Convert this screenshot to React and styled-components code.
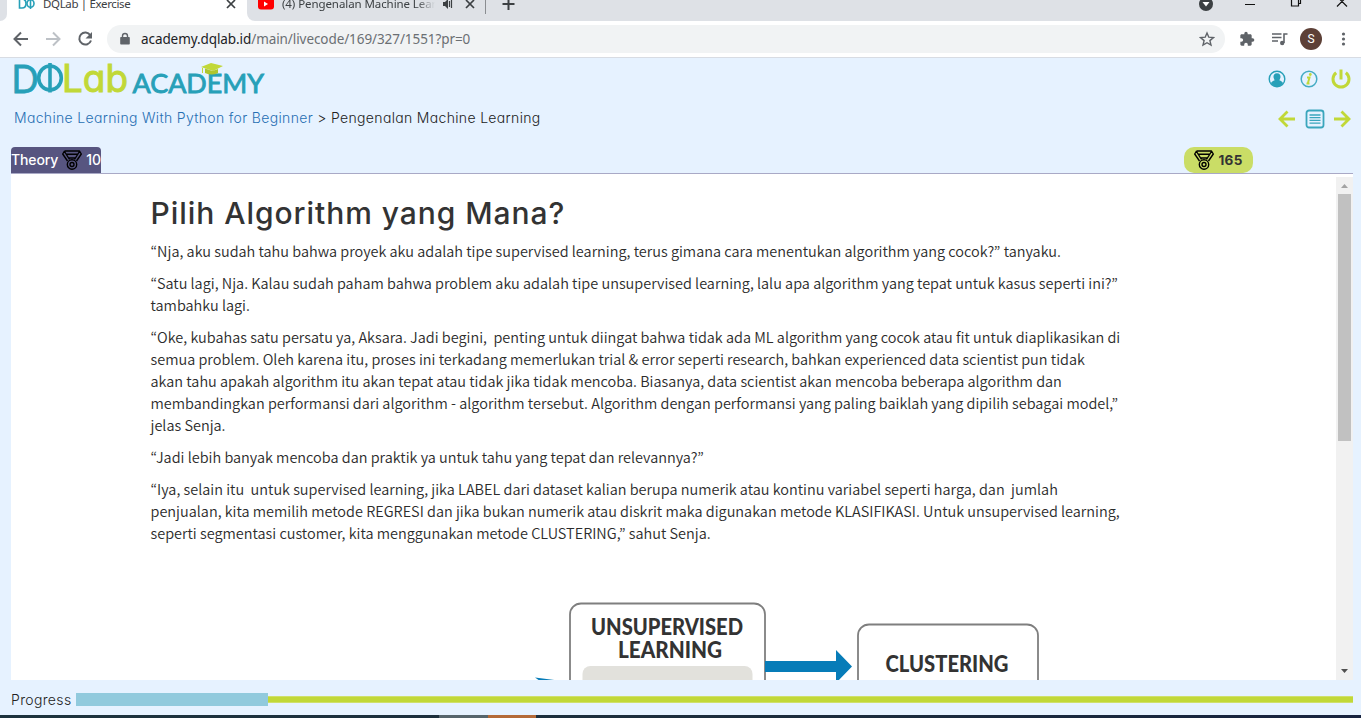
import React from 'react';
import styled, { createGlobalStyle } from 'styled-components';

const teal = '#27a0b8';
const lime = '#c1d838';
const heading = '"Inter", "Open Sans", sans-serif';

const Global = createGlobalStyle`
  * { box-sizing: border-box; }
  body { margin: 0; overflow: hidden; }
`;

const Screen = styled.div`
  width: 1361px;
  height: 718px;
  display: flex;
  flex-direction: column;
  background: #e6f2ff;
  overflow: hidden;
  font-family: ${heading};
  font-feature-settings: 'cv11';
`;

/* ---------- browser chrome ---------- */
const TabStrip = styled.div`
  height: 21px;
  flex: none;
  display: flex;
  background: #fff;
  overflow: hidden;
  font: 11.5px/16px "Noto Sans", sans-serif;
  color: #3c4043;
`;
const StripEdge = styled.div`
  width: 7px;
  background: #dee1e6;
  border-bottom-right-radius: 7px;
`;
const ActiveTab = styled.div`
  width: 240px;
  display: flex;
  align-items: flex-start;
  padding: 0 10px 0 11px;
`;
const StripRest = styled.div`
  flex: 1;
  display: flex;
  align-items: flex-start;
  background: #dee1e6;
  border-bottom-left-radius: 8px;
  padding-left: 10px;
`;
const TabTitle = styled.span`
  width: ${(p) => p.$w}px;
  margin: -4px 0 0 ${(p) => p.$gap}px;
  white-space: nowrap;
  overflow: hidden;
  letter-spacing: ${(p) => p.$ls || 0}px;
  ${(p) => p.$fade && 'mask-image: linear-gradient(90deg, #000 88%, transparent);'}
`;
const Spacer = styled.div`flex: 1;`;
const Divider = styled.i`
  width: 1px;
  height: 14px;
  margin: 0 16px 0 9px;
  background: #8a8d91;
`;
const TabIcon = styled.svg`
  flex: none;
  margin-left: ${(p) => p.$ml || 0}px;
`;
const Toolbar = styled.div`
  height: 37px;
  flex: none;
  display: flex;
  align-items: center;
  background: #fff;
  border-bottom: 1px solid #d8dce3;
  padding: 0 13px 0 13px;
`;
const Address = styled.div`
  flex: 1;
  height: 28px;
  display: flex;
  align-items: center;
  margin-left: 14px;
  padding: 0 10px 0 12px;
  border-radius: 14px;
  background: #f1f3f4;
  font: 13.5px "Noto Sans", sans-serif;
  color: #6b6f73;
`;
const Url = styled.span`
  margin-left: 10px;
  letter-spacing: ${(p) => p.$ls}px;
  b { font-weight: 400; color: #202124; }
`;
const NavIcons = styled.div`
  display: flex;
  gap: 16px;
`;
const ToolIcons = styled.div`
  display: flex;
  align-items: center;
  padding-left: 14px;
`;
const Avatar = styled.div`
  width: 22px;
  height: 22px;
  margin: 0 16px 0 12px;
  border-radius: 50%;
  background: #5d4037;
  color: #fff;
  font: 12px/22px Roboto, sans-serif;
  text-align: center;
`;

/* ---------- page header ---------- */
const Header = styled.header`
  height: 89px;
  flex: none;
  display: flex;
  justify-content: space-between;
  padding: 0 10px 0 13px;
`;
const Brand = styled.div`
  display: flex;
  flex-direction: column;
`;
const Crumbs = styled.nav`
  margin: 10px 0 0 1px;
  font-size: 14px;
  font-weight: 300;
  line-height: 20px;
  white-space: nowrap;
  color: #222;
  letter-spacing: ${(p) => p.$ls}px;
  a { color: #276fb3; }
`;
const Actions = styled.div`
  display: flex;
  flex-direction: column;
  align-items: flex-end;
  padding-top: 11px;
`;
const ActionRow = styled.div`
  display: flex;
  align-items: center;
  gap: ${(p) => p.$gap}px;
  height: 20px;
  margin-bottom: 20px;
`;

/* ---------- lesson ---------- */
const TabBar = styled.div`
  height: 27px;
  flex: none;
  display: flex;
  justify-content: space-between;
  margin: 0 8px 0 11px;
  border-bottom: 1px solid #a9a9c6;
`;
const Theory = styled.div`
  width: 90px;
  height: 26px;
  display: flex;
  align-items: center;
  justify-content: space-between;
  border-radius: 4px 4px 0 0;
  background: #575580;
  color: #fff;
  font-size: 14px;
  line-height: 24px;
  font-weight: 500;
  letter-spacing: -0.1px;
`;
const Score = styled.div`
  width: 69px;
  height: 26px;
  margin-right: 100px;
  display: flex;
  align-items: center;
  justify-content: center;
  gap: 4px;
  border-radius: 10px;
  background: #cadd66;
  color: #333;
  font-size: 13.5px;
  font-weight: 700;
  letter-spacing: 0.3px;
`;
const Panel = styled.main`
  height: 506px;
  flex: none;
  display: flex;
  margin: 0 8px 0 11px;
  background: #fff;
  overflow: hidden;
`;
const Article = styled.article`
  flex: 1;
  padding: 19px 0 0 139.5px;
  overflow: hidden;
`;
const Title = styled.h1`
  margin: 0 0 7px;
  font: 500 30px/40px ${heading};
  letter-spacing: ${(p) => p.$ls}px;
  color: #333;
`;
const Para = styled.p`
  margin: 0 0 10px;
  font: 350 14.485px/22px "Noto Sans CJK KR", sans-serif;
  font-feature-settings: normal;
  color: #2c2c2c;
`;
const Line = styled.span`
  display: block;
  white-space: pre;
`;
const Figure = styled.figure`
  margin: 56px 0 0 383.5px;
`;
const ScrollTrack = styled.div`
  width: 17px;
  height: 503px;
  margin-top: 3px;
  display: flex;
  flex-direction: column;
  align-items: center;
  background: #f1f1f1;
`;
const ScrollThumb = styled.div`
  width: 13px;
  height: 247px;
  background: #c1c1c1;
`;
const ProgressRow = styled.div`
  height: 35px;
  flex: none;
  display: flex;
  align-items: center;
  padding: 4px 8px 0 11px;
  font-size: 14px;
  font-weight: 300;
  color: #222;
`;
const ProgressLabel = styled.span`
  width: 65px;
  letter-spacing: ${(p) => p.$ls}px;
`;
const ProgressDone = styled.div`
  width: 192px;
  height: 13px;
  background: #91cadd;
`;
const ProgressLeft = styled.div`
  flex: 1;
  height: 7px;
  background: ${lime};
  border: solid #cfe06a;
  border-width: 1px 0;
`;
const Taskbar = styled.div`
  height: 3px;
  flex: none;
  display: flex;
  padding-left: 439px;
  background: linear-gradient(90deg, #1d333d, #1b2c3c 60%, #17233f);
`;
const TaskItem = styled.div`
  width: ${(p) => p.$w}px;
  background: ${(p) => p.$c};
`;

const Medal = () => (
  <svg width="20" height="20" viewBox="0 0 20 20" fill="none" stroke="#000" strokeWidth="1.400" strokeLinejoin="round">
    <path d="M2.500 1h15l1.800 3-4.800 7M2.500 1 .7 4l4.800 7M4 4.200h12M2.500 1.500 7.500 9.500M17.500 1.500 12.500 9.500M6.500 8h7" />
    <circle cx="10" cy="14.500" r="4.700" />
    <circle cx="10" cy="14.500" r="2" />
  </svg>
);

const Logo = () => (
  <svg width="252" height="40" viewBox="13 58 252 40">
    <g fontFamily="Lato, sans-serif">
      <g fill={teal} stroke={teal}>
        <text x="11.500" y="92.500" fontSize="39.500" strokeWidth=".8" textLength="27" lengthAdjust="spacingAndGlyphs">D</text>
        <ellipse cx="50" cy="78" rx="11.300" ry="12" fill="none" strokeWidth="3.600" />
        <path d="M50 63v29.500" strokeWidth="3.600" />
      </g>
      <text x="62" y="92.300" fontFamily="Inter, sans-serif" fontSize="38" fill={lime} stroke={lime} strokeWidth="1" textLength="66" lengthAdjust="spacingAndGlyphs">Lab</text>
      <text x="132.500" y="92.500" fontSize="27.500" fill={teal} stroke={teal} strokeWidth=".9" textLength="131.500" lengthAdjust="spacingAndGlyphs">ACADEMY</text>
    </g>
    <path d="m201 67 10-4 12 3-10 5z" fill={lime} />
    <path d="M205 68.500v4.500q7 3 13 0v-4l-5.500 2z" fill="#aec52e" />
    <path d="M202.500 68v5" stroke={lime} />
  </svg>
);

const Diagram = () => (
  <svg width="506" height="80" viewBox="534 600 506 80" fontFamily="Lato, sans-serif" fontWeight="900" fill="#333" fontSize="22">
    <path d="M535 677.500 562 681H540z" fill="#077cb8" />
    <rect x="570" y="603.500" width="195" height="120" rx="11" fill="#fff" stroke="#7f7f7f" strokeWidth="1.800" />
    <rect x="582.500" y="666" width="170" height="50" rx="8" fill="#e2e1dc" />
    <text x="591" y="634.500" textLength="152" lengthAdjust="spacingAndGlyphs">UNSUPERVISED</text>
    <text x="618" y="657.500" textLength="104" lengthAdjust="spacingAndGlyphs">LEARNING</text>
    <path d="M765 661h71v-11l16 16.500-16 16.500v-11h-71z" fill="#077cb8" />
    <rect x="858" y="624.500" width="180" height="120" rx="11" fill="#fff" stroke="#7f7f7f" strokeWidth="1.800" />
    <text x="885.500" y="671.500" textLength="123" lengthAdjust="spacingAndGlyphs">CLUSTERING</text>
  </svg>
);

const paragraphs = [
  ['“Nja, aku sudah tahu bahwa proyek aku adalah tipe supervised learning, terus gimana cara menentukan algorithm yang cocok?” tanyaku.'],
  [
    '“Satu lagi, Nja. Kalau sudah paham bahwa problem aku adalah tipe unsupervised learning, lalu apa algorithm yang tepat untuk kasus seperti ini?”',
    'tambahku lagi.',
  ],
  [
    '“Oke, kubahas satu persatu ya, Aksara. Jadi begini,  penting untuk diingat bahwa tidak ada ML algorithm yang cocok atau fit untuk diaplikasikan di',
    'semua problem. Oleh karena itu, proses ini terkadang memerlukan trial & error seperti research, bahkan experienced data scientist pun tidak',
    'akan tahu apakah algorithm itu akan tepat atau tidak jika tidak mencoba. Biasanya, data scientist akan mencoba beberapa algorithm dan',
    'membandingkan performansi dari algorithm - algorithm tersebut. Algorithm dengan performansi yang paling baiklah yang dipilih sebagai model,”',
    'jelas Senja.',
  ],
  ['“Jadi lebih banyak mencoba dan praktik ya untuk tahu yang tepat dan relevannya?”'],
  [
    '“Iya, selain itu  untuk supervised learning, jika LABEL dari dataset kalian berupa numerik atau kontinu variabel seperti harga, dan  jumlah',
    'penjualan, kita memilih metode REGRESI dan jika bukan numerik atau diskrit maka digunakan metode KLASIFIKASI. Untuk unsupervised learning,',
    'seperti segmentasi customer, kita menggunakan metode CLUSTERING,” sahut Senja.',
  ],
];

export default function App() {
  return (
    <Screen>
      <Global />
      <TabStrip>
        <StripEdge />
        <ActiveTab>
          <TabIcon width="17" height="10" viewBox="0 0 17 10" fill="none" stroke={teal} strokeWidth="1.600">
            <path d="M1.500-1v9H4q4 0 4-4.500T4-1M12.500-2V9" />
            <ellipse cx="12.500" cy="3.500" rx="3.500" ry="3.800" />
          </TabIcon>
          <TabTitle $gap={8} $w={150} $ls={-0.35}>DQLab | Exercise</TabTitle>
          <Spacer />
          <TabIcon width="12" height="10" viewBox="0 0 12 10" stroke="#3c4043" strokeWidth="1.700"><path d="m2 0 8 8M10 0 2 8" /></TabIcon>
        </ActiveTab>
        <StripRest>
          <TabIcon width="17" height="11" viewBox="0 0 17 11"><rect x="1" y="-3" width="16" height="12.500" rx="3" fill="red" /><path d="M7 1.500v5L11 4z" fill="#fff" /></TabIcon>
          <TabTitle $gap={8} $w={153} $ls={-0.08} $fade>(4) Pengenalan Machine Learning</TabTitle>
          <TabIcon $ml={7} width="12" height="10" viewBox="0 0 12 10" fill="none" stroke="#3c4043"><path d="M1 2h2l3-3v10L3 6H1z" fill="#3c4043" stroke="none" /><path d="M7.500 1v6M9.500 0v8" strokeWidth="1.200" /></TabIcon>
          <TabIcon $ml={10} width="12" height="10" viewBox="0 0 12 10" stroke="#3c4043" strokeWidth="1.700"><path d="m2 0 8 8M10 0 2 8" /></TabIcon>
          <Divider />
          <TabIcon width="13" height="11" viewBox="0 0 13 11" stroke="#3c4043" strokeWidth="2"><path d="M.5 4h12M6.500-2v12" /></TabIcon>
          <Spacer />
          <TabIcon width="162" height="20" viewBox="1199 0 162 20" fill="none" stroke="#111">
            <circle cx="1206" cy="4" r="7" fill="#3c4043" stroke="none" />
            <path d="M1202.500 2h7l-3.500 4.500z" fill="#fff" stroke="none" />
            <path d="M1245 4.500h10M1291.500-1v7h7v-7M1298.500 3.500h2v-5M1337 6.500l10-10M1337-3.500l10 10" strokeWidth="1.200" />
          </TabIcon>
        </StripRest>
      </TabStrip>
      <Toolbar>
        <NavIcons>
          <svg width="16" height="16" viewBox="0 0 16 16" fill="none" stroke="#5f6368" strokeWidth="2"><path d="M15 8H2.500M8 1.500 1.500 8 8 14.500" /></svg>
          <svg width="16" height="16" viewBox="0 0 16 16" fill="none" stroke="#bdc1c6" strokeWidth="2"><path d="M1 8h12.500M8 1.500 14.500 8 8 14.500" /></svg>
          <svg width="16" height="16" viewBox="0 0 16 16" fill="none" stroke="#5f6368" strokeWidth="2"><path d="M13.300 4.200A6 6 0 1 0 14 9.500" /><path d="M15 1v6.500H8.500z" fill="#5f6368" stroke="none" /></svg>
        </NavIcons>
        <Address>
          <svg width="12" height="14" viewBox="0 0 12 14" fill="#5f6368"><path d="M2.800 5V4a3.200 3.200 0 0 1 6.400 0v1H10q.8 0 .8.800v5.900q0 .8-.8.800H2q-.8 0-.8-.8V5.800Q1.200 5 2 5zm1.400 0h3.600V4a1.800 1.800 0 0 0-3.600 0z" /></svg>
          <Url $ls={-0.08}><b>academy.dqlab.id</b>/main/livecode/169/327/1551?pr=0</Url>
          <Spacer />
          <svg width="16" height="16" viewBox="0 0 16 16" fill="none" stroke="#5f6368" strokeWidth="1.400"><path d="m8 2 1.800 4.200 4.600.4-3.500 3 1.100 4.500L8 11.700l-4 2.400 1.100-4.500-3.500-3 4.600-.4z" /></svg>
        </Address>
        <ToolIcons>
          <svg width="16" height="16" viewBox="0 0 24 24" fill="#5f6368"><path d="M20.500 11H19V7c0-1.100-.9-2-2-2h-4V3.500a2.500 2.500 0 0 0-5 0V5H4c-1.100 0-2 .9-2 2v3.800h1.500a2.700 2.700 0 0 1 0 5.400H2V20c0 1.100.9 2 2 2h3.800v-1.500a2.700 2.700 0 0 1 5.400 0V22H17c1.100 0 2-.9 2-2v-4h1.500a2.500 2.500 0 0 0 0-5z" /></svg>
          <TabIcon $ml={16} width="17" height="14" viewBox="0 0 17 14" fill="none" stroke="#5f6368" strokeWidth="1.600"><path d="M1 2h9.500M1 5.500h9.500M1 9h6M13 11V2h3.500" /><circle cx="11.200" cy="11" r="2.200" fill="#5f6368" stroke="none" /></TabIcon>
          <Avatar>S</Avatar>
          <svg width="10" height="16" viewBox="0 0 10 16" fill="#5f6368"><circle cx="5.500" cy="3" r="1.600" /><circle cx="5.500" cy="8" r="1.600" /><circle cx="5.500" cy="13" r="1.600" /></svg>
        </ToolIcons>
      </Toolbar>
      <Header>
        <Brand>
          <Logo />
          <Crumbs $ls={0.33}><a>Machine Learning With Python for Beginner</a> &gt; Pengenalan Machine Learning</Crumbs>
        </Brand>
        <Actions>
          <ActionRow $gap={13.5}>
            <svg width="18" height="18" viewBox="0 0 18 18"><circle cx="9" cy="9" r="7.800" fill="none" stroke={teal} strokeWidth="1.400" /><path d="M9 3.200c2.600 0 3.800 1.800 3.500 4-.2 1.300-.8 2.300-1.200 3 1.700.7 3.400 1.300 3.700 3A7.500 7.500 0 0 1 9 16.500a7.500 7.500 0 0 1-6-3.300c.3-1.700 2-2.300 3.700-3-.4-.7-1-1.700-1.200-3-.3-2.200.9-4 3.500-4z" fill={teal} /></svg>
            <svg width="18" height="18" viewBox="0 0 18 18"><circle cx="9" cy="9" r="7.800" fill="none" stroke="#45acc4" strokeWidth="1.500" /><path d="M7 7.500h2.500l-1.700 6M6.500 13.500h3" fill="none" stroke={lime} strokeWidth="2" /><circle cx="10.300" cy="4.500" r="1.400" fill={lime} /></svg>
            <svg width="20" height="20" viewBox="0 0 20 20" fill="none" stroke={lime} strokeWidth="3"><path d="M5.200 3.700a8 8 0 1 0 9.600 0M10 .5v10" /></svg>
          </ActionRow>
          <ActionRow $gap={8.5}>
            <svg width="18" height="18" viewBox="0 0 18 18" fill="none" stroke={lime} strokeWidth="2.800"><path d="M17 9H2.500M9.500 1.500 2 9l7.500 7.500" /></svg>
            <svg width="20" height="20" viewBox="0 0 20 20" fill="none" stroke="#3aa6bd"><rect x="1.500" y="1.500" width="17" height="17" rx="2.500" strokeWidth="1.800" /><path d="M4.500 6h11M4.500 8.700h11M4.500 11.400h11M4.500 14.100h11" strokeWidth="1.300" /></svg>
            <svg width="18" height="18" viewBox="0 0 18 18" fill="none" stroke={lime} strokeWidth="2.800"><path d="M1 9h14.500M8.500 1.500 16 9l-7.500 7.500" /></svg>
          </ActionRow>
        </Actions>
      </Header>
      <TabBar>
        <Theory><span>Theory</span><Medal /><span>10</span></Theory>
        <Score><Medal /><span>165</span></Score>
      </TabBar>
      <Panel>
        <Article>
          <Title $ls={0.95}>Pilih Algorithm yang Mana?</Title>
          {paragraphs.map((lines) => (
            <Para key={lines[0]}>
              {lines.map((text) => <Line key={text}>{text}</Line>)}
            </Para>
          ))}
          <Figure><Diagram /></Figure>
        </Article>
        <ScrollTrack>
          <svg width="17" height="17" viewBox="0 0 17 17"><path d="M5 11h7L8.500 7z" fill="#a3a3a3" /></svg>
          <ScrollThumb />
          <Spacer />
          <svg width="17" height="17" viewBox="0 0 17 17"><path d="M5 6h7l-3.500 4z" fill="#505050" /></svg>
        </ScrollTrack>
      </Panel>
      <ProgressRow>
        <ProgressLabel $ls={0.35}>Progress</ProgressLabel>
        <ProgressDone />
        <ProgressLeft />
      </ProgressRow>
      <Taskbar>
        <TaskItem $w={49} $c="#56656c" />
        <TaskItem $w={48} $c="#b46a38" />
      </Taskbar>
    </Screen>
  );
}
